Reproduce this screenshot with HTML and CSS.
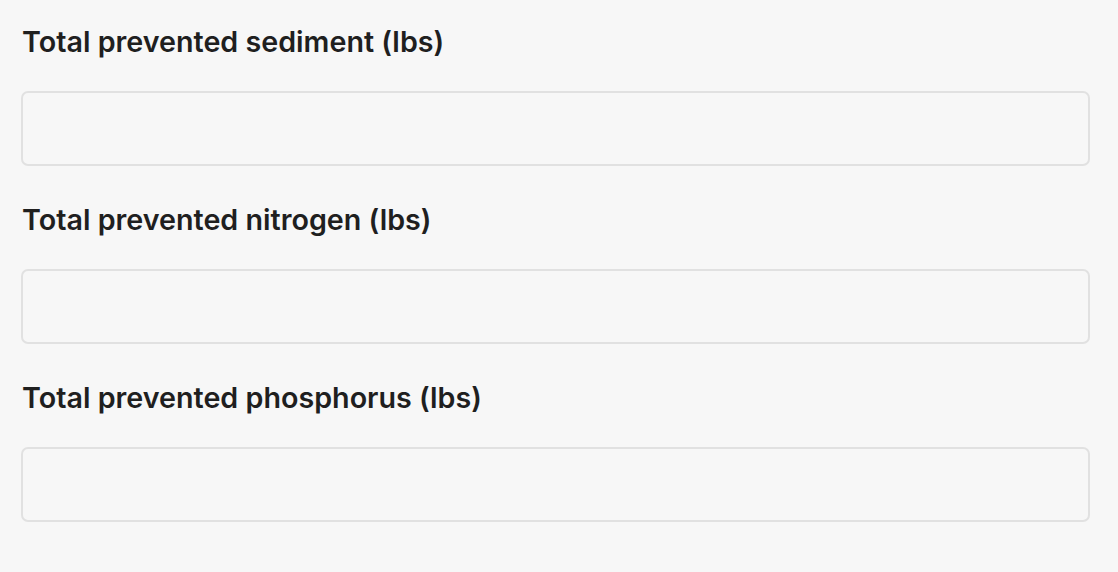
FILE: index.html
```html
<!DOCTYPE html>
<html lang="en">
<head>
<meta charset="utf-8">
<title>Prevented totals</title>
<link rel="stylesheet" href="styles.css">
</head>
<body>
<form class="form">
  <div class="field">
    <label class="label" for="sediment">Total prevented sediment (lbs)</label>
    <input class="input" id="sediment" type="text">
  </div>
  <div class="field">
    <label class="label" for="nitrogen">Total prevented nitrogen (lbs)</label>
    <input class="input" id="nitrogen" type="text">
  </div>
  <div class="field">
    <label class="label" for="phosphorus">Total prevented phosphorus (lbs)</label>
    <input class="input" id="phosphorus" type="text">
  </div>
</form>
</body>
</html>
```
FILE: styles.css
```css
html, body {
  margin: 0;
  background: #f7f7f7;
}
body {
  font-family: Inter, "Noto Sans", sans-serif;
  color: #1f1f1f;
}
.form {
  display: flex;
  flex-direction: column;
  gap: 36px;
  padding: 24px 28px 0 21px;
}
.field {
  display: flex;
  flex-direction: column;
  gap: 31px;
}
.label {
  display: block;
  font-size: 28.7px;
  font-weight: 600;
  line-height: 36px;
  padding-left: 1px;
}
.input {
  box-sizing: border-box;
  height: 75px;
  width: 100%;
  margin: 0;
  border: 2px solid #e1e1e1;
  border-radius: 7px;
  background: #f7f7f7;
  font: inherit;
  outline: none;
}
```
